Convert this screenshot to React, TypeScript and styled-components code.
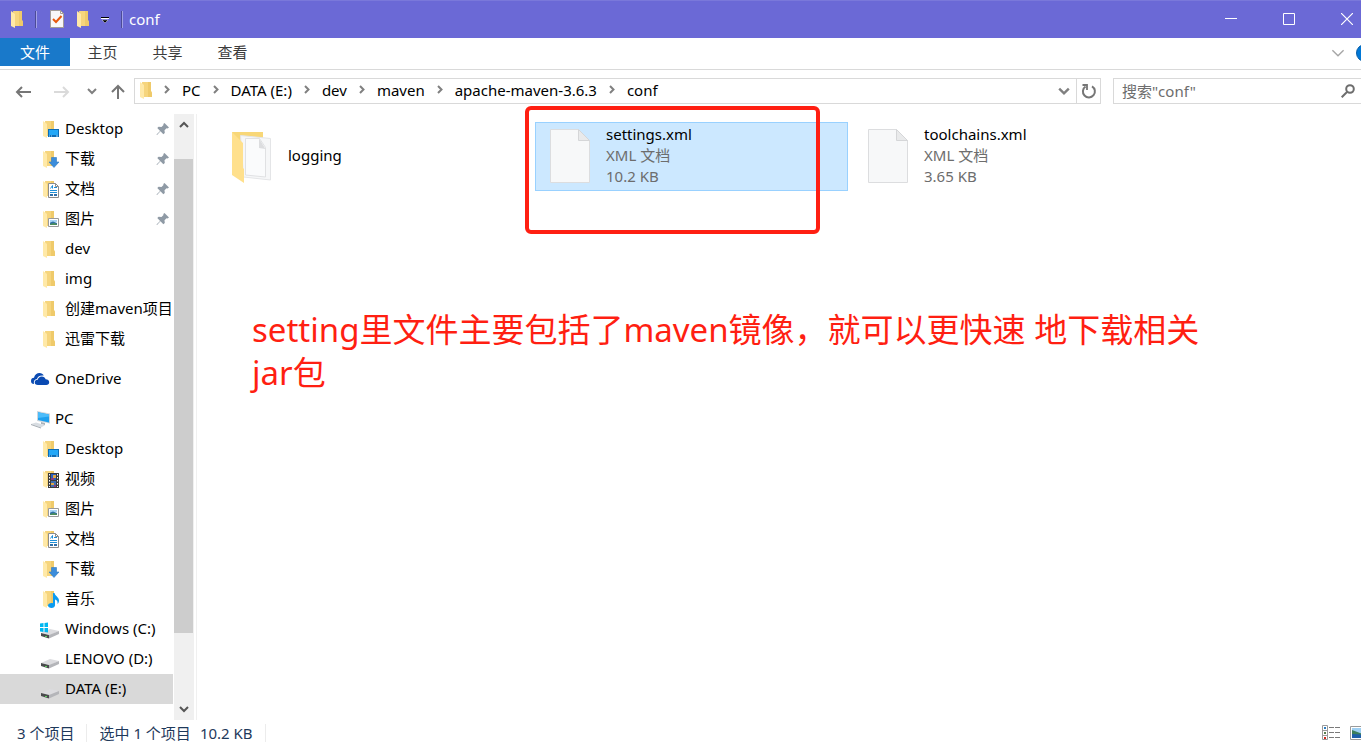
import React from 'react';
import styled, { createGlobalStyle } from 'styled-components';

const GlobalStyle = createGlobalStyle`
  *, *::before, *::after { box-sizing: border-box; }
  body {
    margin: 0;
    background: #fff;
    color: #000;
    font: 15px/20px "Noto Sans", "Noto Sans CJK SC", sans-serif;
  }
  button, input { font: inherit; color: inherit; }
  button { padding: 0; border: 0; background: none; }
  a { color: inherit; text-decoration: none; }
  svg { display: block; flex: none; }
`;

const Window = styled.div`
  display: flex;
  flex-direction: column;
  height: 100vh;
  overflow: hidden;
`;

/* ---------- title bar ---------- */

const TitleBar = styled.header`
  display: flex;
  align-items: center;
  flex: none;
  height: 38px;
  padding-left: 11px;
  background: #6b69d6;
  box-shadow: inset 0 1px #7a78da;
  color: #fff;
`;

const QuickTools = styled.div`
  display: flex;
  align-items: center;
  gap: 12px;
`;

const QuickButton = styled.button`
  display: flex;
`;

const Separator = styled.span`
  width: 2px;
  height: 17px;
  background: #4c4b97;
  border-right: 1px solid #a3a2e6;
`;

const Title = styled.h1`
  margin: 0 auto 0 6px;
  font-size: 15px;
  font-weight: 400;
`;

const WindowControls = styled.div`
  display: flex;
  margin-right: -15px;
`;

const WindowButton = styled.button`
  display: flex;
  align-items: center;
  justify-content: center;
  width: 58px;
  height: 38px;
`;

/* ---------- ribbon tabs ---------- */

const Ribbon = styled.nav`
  display: flex;
  flex: none;
  height: 32px;
  border-bottom: 1px solid #d9d9d9;
`;

const RibbonTab = styled.button<{ $primary?: boolean }>`
  width: ${p => (p.$primary ? 70 : 65)}px;
  height: 28px;
  background: ${p => (p.$primary ? '#1979ca' : 'transparent')};
  color: ${p => (p.$primary ? '#fff' : '#3c3c3c')};
`;

const RibbonTools = styled.div`
  display: flex;
  align-items: center;
  gap: 11px;
  height: 30px;
  margin: 0 -13px 0 auto;
`;

const HelpButton = styled.button`
  width: 18px;
  height: 18px;
  border-radius: 9px;
  background: #0078d7;
  border: 1px solid #0a5ea8;
`;

/* ---------- address row ---------- */

const AddressRow = styled.div`
  display: flex;
  flex: none;
  padding: 8px 0 4px;
`;

const History = styled.div`
  display: flex;
  flex: none;
  width: 134px;
  padding-left: 15px;
  align-items: center;
`;

const HistoryButton = styled.button<{ $width: number }>`
  display: flex;
  width: ${p => p.$width}px;
`;

const AddressBox = styled.div`
  display: flex;
  align-items: center;
  flex: 1;
  min-width: 0;
  height: 26px;
  padding-left: 2px;
  border: 1px solid #d9d9d9;
`;

const Crumbs = styled.nav`
  display: flex;
  align-items: center;
  flex: 1;
  min-width: 0;
  height: 24px;
  padding-bottom: 2px;
  overflow: hidden;
  white-space: nowrap;
`;

const CrumbArrow = styled.span`
  display: flex;
  justify-content: center;
  width: 30px;
`;

const AddressButton = styled.button<{ $divided?: boolean }>`
  display: flex;
  align-items: center;
  justify-content: center;
  width: 24px;
  height: 24px;
  border-left: ${p => (p.$divided ? '1px solid #d9d9d9' : '0')};
`;

const SearchBox = styled.label`
  display: flex;
  align-items: center;
  width: 248px;
  height: 26px;
  margin-left: 12px;
  padding: 0 6px 0 8px;
  border: 1px solid #d9d9d9;
  border-right: 0;
`;

const SearchInput = styled.input`
  flex: 1;
  min-width: 0;
  height: 22px;
  padding: 0;
  border: 0;
  outline: 0;
  background: none;
  &::placeholder { color: #6d6d6d; opacity: 1; }
`;

/* ---------- body ---------- */

const Body = styled.div`
  display: flex;
  flex: 1;
  min-height: 0;
  padding-top: 6px;
`;

const Sidebar = styled.aside`
  display: flex;
  flex: none;
  width: 197px;
  border-right: 1px solid #f0f0f0;
`;

const Tree = styled.nav`
  width: 173px;
  margin-right: 1px;
  overflow: hidden;
`;

const TreeGroup = styled.div`
  margin-bottom: 10px;
`;

const TreeRow = styled.a<{ $root?: boolean; $selected?: boolean }>`
  display: flex;
  align-items: center;
  gap: 5px;
  height: 30px;
  padding-left: ${p => (p.$root ? 30 : 40)}px;
  background: ${p => (p.$selected ? '#d9d9d9' : 'transparent')};
  white-space: nowrap;
`;

const TreeLabel = styled.span`
  padding-bottom: 2px;
`;

const PinSlot = styled.span`
  margin: 0 3px 0 auto;
`;

const ScrollBar = styled.div`
  display: flex;
  flex-direction: column;
  width: 20px;
  background: #f0f0f0;
`;

const ScrollButton = styled.button`
  display: flex;
  align-items: center;
  justify-content: center;
  flex: none;
  width: 19px;
  height: 22px;
`;

const ScrollTrack = styled.div`
  flex: 1;
  padding-top: 23px;
`;

const ScrollThumb = styled.div`
  width: 19px;
  height: 88%;
  background: #cdcdcd;
`;

const Files = styled.main`
  flex: 1;
  min-width: 0;
  padding: 8px 20px;
`;

const FileGrid = styled.div`
  display: flex;
  flex-wrap: wrap;
  gap: 5px;
`;

const FileTile = styled.button<{ $selected?: boolean }>`
  position: relative;
  display: flex;
  align-items: center;
  gap: 16px;
  width: 313px;
  height: 69px;
  padding-left: 14px;
  border: 1px solid ${p => (p.$selected ? '#99d1ff' : 'transparent')};
  background: ${p => (p.$selected ? '#cce8ff' : 'transparent')};
  text-align: left;
`;

const FileInfo = styled.span`
  display: flex;
  flex-direction: column;
  padding-bottom: 2px;
  line-height: 21px;
`;

const FileMeta = styled.span`
  color: #6d6d6d;
`;

const Highlight = styled.span`
  position: absolute;
  left: -11px;
  top: -17px;
  width: 295px;
  height: 128px;
  border: 4px solid #ff1f12;
  border-radius: 6px;
  pointer-events: none;
`;

const Annotation = styled.p`
  max-width: 980px;
  margin: 117px 0 0 35px;
  color: #ff1f12;
  font-size: 33px;
  line-height: 43px;
`;

/* ---------- status bar ---------- */

const StatusBar = styled.footer`
  display: flex;
  flex: none;
  height: 22px;
  padding: 4px 0 0 17px;
  color: #1e395b;
  line-height: 18px;
  white-space: nowrap;
`;

const StatusCell = styled.span`
  height: 18px;
  margin-right: 12px;
  padding-right: 12px;
  border-right: 1px solid #ececec;
`;

const StatusGap = styled.span`
  margin-left: 9px;
`;

const ViewButtons = styled.div`
  display: flex;
  gap: 10px;
  margin: 0 -9px 0 auto;
`;

/* ---------- drawings ---------- */

const FolderShape = () => (
  <>
    <path d="M5 2h9v9l1 2v4H6z" fill="#f6d57d" />
    <path d="M11 2h3v9l1 2v4h-4z" fill="#efca6a" />
    <path d="M3 2l4 3v14l-4-2z" fill="#ffe9a8" />
  </>
);

const FolderIcon = () => (
  <svg width="12" height="18" viewBox="3 1 12 18"><FolderShape /></svg>
);

const MiniPicture = () => (
  <>
    <path d="M8.500 9.500h10v8h-10z" fill="#fff" stroke="#9a9a9a" />
    <path d="M10 11h7v2h-7z" fill="#a9d4f5" />
    <path d="M10 13.500l3-1 4 1.500v1h-7z" fill="#2f6fa8" />
    <path d="M10 15l4-1 3 1v1h-7z" fill="#4c8c5b" />
  </>
);

const Drive = () => (
  <>
    <path d="M1 14l9-4 9 2-9 4z" fill="#dcdcdf" />
    <path d="M1 14l8 2v3.500l-8-2.500z" fill="#4a4c4d" />
    <path d="M9 16l10-4v3l-10 4.500z" fill="#b4b5b9" />
    <path d="M5 17h2v1H5z" fill="#5ed55e" />
  </>
);

type IconName =
  | 'desktop' | 'download' | 'document' | 'picture' | 'folder' | 'video'
  | 'music' | 'cloud' | 'computer' | 'system' | 'drive';

const treeArt: Record<IconName, React.ReactNode> = {
  folder: <FolderShape />,
  desktop: (
    <>
      <FolderShape />
      <path d="M8 10h11v8H8z" fill="#0d6cb5" />
      <path d="M9 11h9v5H9z" fill="#22a7f7" />
      <path d="M9 17h1m1 0h1m4 0h2" stroke="#a8dcff" />
    </>
  ),
  download: (
    <>
      <FolderShape />
      <path d="M11.500 8.500h5v4.500h2.500l-5 5.500L9 13h2.500z" fill="#3c8ddb" stroke="#2f78c0" strokeWidth=".6" />
    </>
  ),
  document: (
    <>
      <FolderShape />
      <path d="M8.500 4.500h7l3 3v11h-10z" fill="#fff" stroke="#8c8c8c" />
      <path d="M15.500 4.500v3h3" fill="none" stroke="#8c8c8c" />
      <path d="M10.500 9.500l2-3v3M14 8.500h3M10 11.500h7M10 13.500h7" fill="none" stroke="#1d8fd8" />
      <path d="M10 16h3M14 16h3" stroke="#2f6fa8" strokeWidth="2" />
    </>
  ),
  picture: <><FolderShape /><MiniPicture /></>,
  video: (
    <>
      <FolderShape />
      <path d="M8 4h11v15H8z" fill="#3b3b3b" />
      <path d="M9.500 5v13M17.500 5v13" stroke="#fff" strokeDasharray="1.500 1.500" />
      <path d="M11 5h5v6h-5z" fill="#2b5fc0" />
      <path d="M11 12h5v6h-5z" fill="#3f6eb0" />
      <path d="M13 6h3v3h-3zM11 14h3v2h-3z" fill="#dfa648" />
      <path d="M11 9h3v2h-3zM14 16h2v2h-2z" fill="#8b3d7d" />
    </>
  ),
  music: (
    <>
      <FolderShape />
      <path d="M13 4h1.500c.5 3 4.500 4 4.500 7.500 0 1.500-.5 2.500-1.500 3.500.5-3-1-4-2.500-4.500V16c0 2-1.500 3-3.500 3S8 18 8 16.500 9.500 14 11.500 14c.6 0 1 .1 1.500.3z" fill="#0c9bf0" />
    </>
  ),
  cloud: (
    <>
      <path d="M1 12c0-2 1.200-3.200 3-3.200C4.500 5.500 7 4 9.500 4c2 0 3.500 1 4.300 2.600C9.500 6 7.500 8 7 10c-2.500.2-3.700 2-3 5C2 15 1 14 1 12z" fill="#0a4ab2" />
      <path d="M8 16c-2.200 0-3.300-1-3.300-2.700 0-1.500 1.200-2.600 3-2.500.4-2 2-3.300 4-3.300 1.900 0 3.300 1 3.900 2.700 2.100 0 3.600 1.200 3.600 3 0 1.700-1.200 2.800-3 2.800z" fill="#0a4ab2" />
    </>
  ),
  computer: (
    <>
      <path d="M7 2l13 2.500v10L7 12z" fill="#cfd6dc" />
      <path d="M8 3.200l11 2.200v8L8 11z" fill="#1ea0ee" />
      <path d="M8 3.200l11 2.200v2L8 9z" fill="#4cbcfa" />
      <path d="M11 13l4 1v2l-4-1z" fill="#a9b2ba" />
      <path d="M1 15l5-1.500 9 2.700-4 2.300z" fill="#d8dde2" />
      <path d="M1 15l10 3.500v1L1 16z" fill="#a4abb2" />
    </>
  ),
  system: (
    <>
      <Drive />
      <path d="M0 4.500l3.500-.5v4H0zM4.500 4L8 3.500V8H4.500zM0 9h3.500v4L0 12.500zM4.500 9H8v4.500L4.500 13z" fill="#00b7f1" />
    </>
  ),
  drive: <Drive />,
};

const TreeIcon = ({ name }: { name: IconName }) => (
  <svg width="20" height="20" viewBox="0 0 20 20">{treeArt[name]}</svg>
);

const Pin = () => (
  <svg width="14" height="14" viewBox="0 0 14 14">
    <path d="M8.500 1L13 5.500l-1.500 1-1-.3-2 2 .3 2.800-1.500 1.200-2.800-2.900L1 13l-.5-.5 3.600-3.600L1.300 6l1.300-1.300 2.900.3 2-2-.2-1z" fill="#8f9aa5" />
  </svg>
);

const Chevron = ({ dir, size = 10, color = '#808080', weight = 2 }: {
  dir: 'up' | 'down' | 'right'; size?: number; color?: string; weight?: number;
}) => {
  const d = { up: 'M1 7l4-4 4 4', down: 'M1 3l4 4 4-4', right: 'M3 1l3.500 3.500L3 8' }[dir];
  return (
    <svg width={size} height={size} viewBox="0 0 10 10">
      <path d={d} fill="none" stroke={color} strokeWidth={weight} />
    </svg>
  );
};

const Arrow = ({ dir, color }: { dir: 'left' | 'right' | 'up'; color: string }) => {
  const d = {
    left: 'M16 10H2M7 5l-5 5 5 5',
    right: 'M1 10h14M10 5l5 5-5 5',
    up: 'M9 17V4M3 10l6-6 6 6',
  }[dir];
  return (
    <svg width="18" height="18" viewBox="0 0 18 18">
      <path d={d} fill="none" stroke={color} strokeWidth="2" />
    </svg>
  );
};

const FileIcon = () => (
  <svg width="40" height="56" viewBox="0 0 40 56">
    <path d="M.5.5h28l11 11v42H.5z" fill="#f7f8f9" stroke="#dcdddf" />
    <path d="M28.500.5v11h11z" fill="#e9eaeb" stroke="#d5d6d8" />
  </svg>
);

const FullFolderIcon = () => (
  <svg width="40" height="56" viewBox="0 0 40 56">
    <path d="M0 3h31v30H3z" fill="#f8d778" />
    <path d="M8.500 6.500l30 3v41.500l-27-3z" fill="#f6f7f8" stroke="#e4e5e7" />
    <path d="M13.500 9.500h14l6 9v29.500l-20-2z" fill="#fafbfc" stroke="#e0e1e3" />
    <path d="M27 9.500v9.500l6.500 1z" fill="#dcdddf" />
    <path d="M0 3l11 11v25l1 1v14L0 46z" fill="#ffe08c" />
  </svg>
);

/* ---------- data ---------- */

type Entry = { label: string; icon: IconName; pinned?: boolean; root?: boolean; selected?: boolean };

const groups: Entry[][] = [
  [
    { label: 'Desktop', icon: 'desktop', pinned: true },
    { label: '下载', icon: 'download', pinned: true },
    { label: '文档', icon: 'document', pinned: true },
    { label: '图片', icon: 'picture', pinned: true },
    { label: 'dev', icon: 'folder' },
    { label: 'img', icon: 'folder' },
    { label: '创建maven项目', icon: 'folder' },
    { label: '迅雷下载', icon: 'folder' },
  ],
  [{ label: 'OneDrive', icon: 'cloud', root: true }],
  [
    { label: 'PC', icon: 'computer', root: true },
    { label: 'Desktop', icon: 'desktop' },
    { label: '视频', icon: 'video' },
    { label: '图片', icon: 'picture' },
    { label: '文档', icon: 'document' },
    { label: '下载', icon: 'download' },
    { label: '音乐', icon: 'music' },
    { label: 'Windows (C:)', icon: 'system' },
    { label: 'LENOVO (D:)', icon: 'drive' },
    { label: 'DATA (E:)', icon: 'drive', selected: true },
  ],
];

const crumbs = ['PC', 'DATA (E:)', 'dev', 'maven', 'apache-maven-3.6.3', 'conf'];

export default function App() {
  return (
    <Window>
      <GlobalStyle />
      <TitleBar>
        <QuickTools>
          <FolderIcon />
          <Separator />
          <QuickButton aria-label="属性">
            <svg width="16" height="18" viewBox="0 0 16 18">
              <path d="M1.500.5h10l3 3v14h-13z" fill="#f8f8f8" stroke="#a39d98" />
              <path d="M11.500.5v3h3" fill="none" stroke="#a39d98" />
              <path d="M4 9l3 3 5.500-6" fill="none" stroke="#e8590c" strokeWidth="2" />
            </svg>
          </QuickButton>
          <QuickButton aria-label="新建文件夹"><FolderIcon /></QuickButton>
          <QuickButton aria-label="自定义快速访问工具栏">
            <svg width="8" height="10" viewBox="0 0 8 10">
              <path d="M0 3.500h8" stroke="#000" />
              <path d="M0 4.500h8" stroke="#fff" />
              <path d="M1 6h6L4 9z" fill="#000" stroke="#fff" strokeWidth=".4" />
            </svg>
          </QuickButton>
          <Separator />
        </QuickTools>
        <Title>conf</Title>
        <WindowControls>
          <WindowButton aria-label="最小化">
            <svg width="12" height="12" viewBox="0 0 12 12"><path d="M0 5.500h12" stroke="#fff" /></svg>
          </WindowButton>
          <WindowButton aria-label="最大化">
            <svg width="12" height="12" viewBox="0 0 12 12"><path d="M.5.5h11v11H.5z" fill="none" stroke="#fff" /></svg>
          </WindowButton>
          <WindowButton aria-label="关闭">
            <svg width="12" height="12" viewBox="0 0 12 12"><path d="M0 0l12 12M12 0L0 12" stroke="#fff" strokeWidth="1.200" /></svg>
          </WindowButton>
        </WindowControls>
      </TitleBar>

      <Ribbon>
        <RibbonTab $primary>文件</RibbonTab>
        <RibbonTab>主页</RibbonTab>
        <RibbonTab>共享</RibbonTab>
        <RibbonTab>查看</RibbonTab>
        <RibbonTools>
          <button aria-label="展开功能区">
            <Chevron dir="down" size={14} color="#a6a6a6" weight={1} />
          </button>
          <HelpButton aria-label="帮助" />
        </RibbonTools>
      </Ribbon>

      <AddressRow>
        <History>
          <HistoryButton $width={38} aria-label="后退"><Arrow dir="left" color="#767676" /></HistoryButton>
          <HistoryButton $width={34} aria-label="前进"><Arrow dir="right" color="#dadada" /></HistoryButton>
          <HistoryButton $width={22} aria-label="最近位置"><Chevron dir="down" /></HistoryButton>
          <HistoryButton $width={18} aria-label="上移"><Arrow dir="up" color="#767676" /></HistoryButton>
        </History>
        <AddressBox>
          <Crumbs>
            <svg width="15" height="20" viewBox="0 0 15 20"><FolderShape /></svg>
            {crumbs.map(name => (
              <React.Fragment key={name}>
                <CrumbArrow><Chevron dir="right" /></CrumbArrow>
                <a href="#">{name}</a>
              </React.Fragment>
            ))}
          </Crumbs>
          <AddressButton aria-label="历史记录"><Chevron dir="down" size={12} /></AddressButton>
          <AddressButton $divided aria-label="刷新">
            <svg width="16" height="16" viewBox="0 0 16 16">
              <path d="M11 3.300A6 6 0 1 1 4.500 3.500" fill="none" stroke="#767676" strokeWidth="2" />
              <path d="M1.500 2h4.500v5" fill="none" stroke="#767676" strokeWidth="1.800" />
            </svg>
          </AddressButton>
        </AddressBox>
        <SearchBox>
          <SearchInput type="text" aria-label="搜索" placeholder={'搜索"conf"'} />
          <svg width="14" height="14" viewBox="0 0 14 14">
            <circle cx="9" cy="5" r="3.800" fill="none" stroke="#6d6d6d" strokeWidth="2" />
            <path d="M6 8L.7 13.300" stroke="#6d6d6d" strokeWidth="2" />
          </svg>
        </SearchBox>
      </AddressRow>

      <Body>
        <Sidebar>
          <Tree>
            {groups.map((group, i) => (
              <TreeGroup key={i}>
                {group.map(entry => (
                  <TreeRow key={entry.label} href="#" $root={entry.root} $selected={entry.selected}>
                    <TreeIcon name={entry.icon} />
                    <TreeLabel>{entry.label}</TreeLabel>
                    {entry.pinned && <PinSlot><Pin /></PinSlot>}
                  </TreeRow>
                ))}
              </TreeGroup>
            ))}
          </Tree>
          <ScrollBar>
            <ScrollButton aria-label="向上滚动"><Chevron dir="up" color="#555" /></ScrollButton>
            <ScrollTrack><ScrollThumb /></ScrollTrack>
            <ScrollButton aria-label="向下滚动"><Chevron dir="down" color="#555" /></ScrollButton>
          </ScrollBar>
        </Sidebar>
        <Files>
          <FileGrid>
            <FileTile>
              <FullFolderIcon />
              <FileInfo>logging</FileInfo>
            </FileTile>
            <FileTile $selected>
              <FileIcon />
              <FileInfo>settings.xml<FileMeta>XML 文档</FileMeta><FileMeta>10.2 KB</FileMeta></FileInfo>
              <Highlight />
            </FileTile>
            <FileTile>
              <FileIcon />
              <FileInfo>toolchains.xml<FileMeta>XML 文档</FileMeta><FileMeta>3.65 KB</FileMeta></FileInfo>
            </FileTile>
          </FileGrid>
          <Annotation>
            setting里文件主要包括了maven镜像，就可以更快速 地下载相关<br />jar包
          </Annotation>
        </Files>
      </Body>

      <StatusBar>
        <StatusCell>3 个项目</StatusCell>
        <StatusCell>选中 1 个项目<StatusGap>10.2 KB</StatusGap></StatusCell>
        <ViewButtons>
          <button aria-label="详细信息">
            <svg width="18" height="16" viewBox="0 0 18 16">
              <path d="M.5.5h5v14h-5zM.5 5.500h5M.5 10.500h5" fill="#fff" stroke="#9a9a9a" />
              <path d="M2 3h2" stroke="#2b7cc0" strokeWidth="2" />
              <path d="M2 8h2" stroke="#5b7f52" strokeWidth="2" />
              <path d="M2 13h2" stroke="#d0281c" strokeWidth="2" />
              <path d="M7 2.500h5m1 0h5M7 7.500h5m1 0h5M7 12.500h5m1 0h5" stroke="#7a7a7a" />
            </svg>
          </button>
          <button aria-label="大图标">
            <svg width="20" height="16" viewBox="0 0 20 16">
              <path d="M.5 1.500h19v13H.5z" fill="#fff" stroke="#9a9a9a" />
              <path d="M2 3h16v5H2z" fill="#9fd0f3" />
              <path d="M2 5l8 3 8 1v2H2z" fill="#3d7f5b" />
              <path d="M2 9l16 1v3H2z" fill="#1f5fa8" />
            </svg>
          </button>
        </ViewButtons>
      </StatusBar>
    </Window>
  );
}
